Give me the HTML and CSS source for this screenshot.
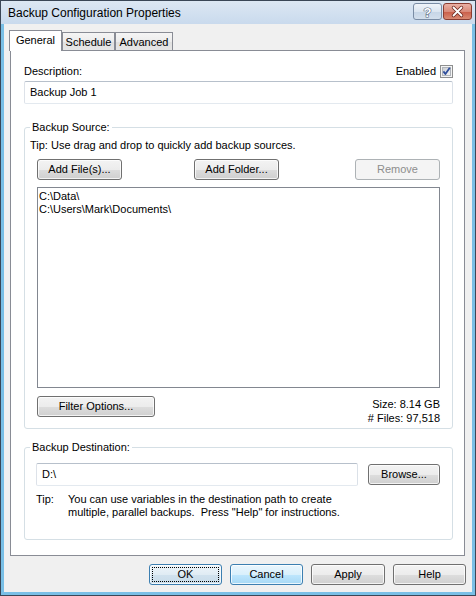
FILE: index.html
```html
<!DOCTYPE html>
<html>
<head>
<meta charset="utf-8">
<title>Backup Configuration Properties</title>
<link rel="stylesheet" href="styles.css">
</head>
<body>
<div class="window">
  <div class="titlebar">
    <span class="title">Backup Configuration Properties</span>
    <div class="caption-btns">
      <span class="cbtn cbtn-help">
        <svg width="27" height="15" viewBox="0 0 27 15"><text x="13.5" y="12.5" text-anchor="middle" font-family="Liberation Sans, sans-serif" font-weight="bold" font-size="13" fill="#ffffff" stroke="#5a6a80" stroke-width="1.2" paint-order="stroke">?</text></svg>
      </span>
      <span class="cbtn cbtn-close">
        <svg width="27" height="15" viewBox="0 0 27 15"><path d="M9.5 3.5 L17.5 11.5 M17.5 3.5 L9.5 11.5" stroke="#6e2a20" stroke-width="3.4" stroke-linecap="round" fill="none"/><path d="M9.5 3.5 L17.5 11.5 M17.5 3.5 L9.5 11.5" stroke="#ffffff" stroke-width="1.8" stroke-linecap="round" fill="none"/></svg>
      </span>
    </div>
  </div>
  <div class="client">
    <div class="tabs">
      <div class="tab tab-active tab-general">General</div>
      <div class="tab tab-schedule">Schedule</div>
      <div class="tab tab-advanced">Advanced</div>
    </div>
    <div class="panel">
      <div class="desc-row">
        <span>Description:</span>
        <span class="enabled">Enabled
          <svg class="checkbox" width="13" height="13" viewBox="0 0 13 13">
            <defs><linearGradient id="cbg" x1="0" y1="0" x2="1" y2="1"><stop offset="0" stop-color="#c9ccd1"/><stop offset="1" stop-color="#f7f7f7"/></linearGradient></defs>
            <rect x="0.5" y="0.5" width="12" height="12" fill="#f4f4f4" stroke="#8e8f8f"/>
            <rect x="2.5" y="2.5" width="8" height="8" fill="url(#cbg)" stroke="#b0b4ba" stroke-width="1"/>
            <path d="M3.4 6.4 L5.4 9 L9.8 2.8" stroke="#2f4e9c" stroke-width="1.8" fill="none" stroke-linejoin="round"/>
          </svg>
        </span>
      </div>
      <div class="textbox desc-input">Backup Job 1</div>

      <fieldset class="group group-source">
        <legend>Backup Source:</legend>
        <p class="tip">Tip: Use drag and drop to quickly add backup sources.</p>
        <div class="btn-row">
          <button class="btn btn-src">Add File(s)...</button>
          <button class="btn btn-src btn-folder">Add Folder...</button>
          <button class="btn btn-src btn-remove btn-disabled">Remove</button>
        </div>
        <div class="listbox">
          <div>C:\Data\</div>
          <div>C:\Users\Mark\Documents\</div>
        </div>
        <div class="filter-row">
          <button class="btn btn-filter">Filter Options...</button>
          <div class="stats">
            <div>Size: 8.14 GB</div>
            <div># Files: 97,518</div>
          </div>
        </div>
      </fieldset>

      <fieldset class="group group-dest">
        <legend>Backup Destination:</legend>
        <div class="dest-row">
          <div class="textbox dest-input">D:\</div>
          <button class="btn btn-browse">Browse...</button>
        </div>
        <div class="dest-tip">
          <span>Tip:</span>
          <span>You can use variables in the destination path to create<br>multiple, parallel backups.&nbsp; Press "Help" for instructions.</span>
        </div>
      </fieldset>
    </div>
    <div class="dialog-btns">
      <button class="btn btn-dlg btn-default">OK</button>
      <button class="btn btn-dlg btn-hot">Cancel</button>
      <button class="btn btn-dlg btn-apply">Apply</button>
      <button class="btn btn-dlg">Help</button>
    </div>
  </div>
</div>
</body>
</html>
```
FILE: styles.css
```css
* { box-sizing: border-box; }
html, body { margin: 0; padding: 0; }
body {
  width: 476px;
  height: 596px;
  overflow: hidden;
  font-family: "Liberation Sans", Arial, sans-serif;
  font-size: 11px;
  color: #000;
  background: #ffffff;
}

.window {
  width: 476px;
  height: 596px;
  border: 1px solid #3a4656;
  background: #79bfe6;
  display: flex;
  flex-direction: column;
}

.titlebar {
  height: 23px;
  flex: none;
  display: flex;
  align-items: flex-start;
  padding: 0 3px 0 7px;
  background: linear-gradient(#dce7f3, #c9daed);
}
.title {
  font-size: 12px;
  line-height: 24px;
}
.caption-btns {
  margin-left: auto;
  display: flex;
  gap: 1px;
  padding-top: 2px;
}
.cbtn {
  width: 29px;
  height: 17px;
  border-radius: 3px;
  display: flex;
  align-items: center;
  justify-content: center;
}
.cbtn-help {
  border: 1px solid #7a8ca4;
  background: linear-gradient(#f0f4f9, #dbe5f0 50%, #c6d5e6 51%, #d3dfec);
}
.cbtn-close {
  border: 1px solid #8a3c31;
  background: linear-gradient(#eab0a4, #d98a7a 50%, #c95c48 51%, #d98a73);
}

.client {
  flex: 1;
  margin: 0 3px 3px 3px;
  background: #f0f0f0;
  padding: 6px 6px 0 5px;
}

.tabs {
  display: flex;
  align-items: flex-end;
  height: 21px;
  margin-bottom: -1px;
  position: relative;
  z-index: 1;
}
.tab {
  height: 18px;
  margin-bottom: 1px;
  border: 1px solid #898c95;
  border-bottom: none;
  background: linear-gradient(#f5f5f5, #ececec 50%, #e0e0e0 51%, #e6e6e6);
  text-align: center;
  line-height: 18px;
}
.tab-active {
  height: 21px;
  margin-bottom: 0;
  background: #ffffff;
  line-height: 19px;
}
.tab-general { width: 53px; }
.tab-schedule { width: 53px; }
.tab-advanced { width: 58px; }

.panel {
  margin-left: 1px;
  width: 455px;
  height: 506px;
  border: 1px solid #898c95;
  background: #ffffff;
  padding: 13px 11px 0 13px;
}

.desc-row {
  height: 14px;
  display: flex;
  align-items: center;
  justify-content: space-between;
  line-height: 13px;
}
.enabled {
  display: flex;
  align-items: center;
  gap: 4px;
}
.checkbox { display: block; }

.textbox {
  height: 23px;
  border: 1px solid;
  border-color: #b7c0cb #dbe1e8 #e3e9ef #dde2e9;
  border-radius: 2px;
  padding: 0 5px;
  line-height: 21px;
  background: #fff;
}
.desc-input { margin-top: 3px; }

.group {
  margin: 17px 0 0 0;
  padding: 0 12px 3px 12px;
  border: 1px solid #d5dfe5;
  border-radius: 3px;
  min-width: 0;
}
.group legend {
  padding: 0 2px;
  margin-left: -7px;
  line-height: 13px;
}
.group-dest {
  margin-top: 12px;
  padding: 0 12px 20px 11px;
}
.group-dest legend { margin-left: -6px; }

.tip {
  margin: 5px 0 0 -7px;
  line-height: 13px;
}

.btn {
  font-family: inherit;
  font-size: 11px;
  color: #000;
  height: 21px;
  padding: 0;
  border: 1px solid #707070;
  border-radius: 3px;
  background: linear-gradient(#f3f3f3, #ececec 50%, #dddddd 51%, #cfcfcf);
  box-shadow: inset 0 0 0 1px rgba(255, 255, 255, 0.75);
  line-height: 19px;
  text-align: center;
}
.btn-row {
  margin-top: 7px;
  display: flex;
}
.btn-src { width: 85px; }
.btn-folder { margin-left: 72px; }
.btn-remove { margin-left: auto; }
.btn-disabled {
  border-color: #adb2b5;
  background: #f4f4f4;
  color: #8d8d8d;
  box-shadow: none;
}

.listbox {
  margin-top: 7px;
  height: 201px;
  border: 1px solid #828790;
  padding: 2px 1px;
  line-height: 13px;
}

.filter-row {
  margin-top: 8px;
  display: flex;
  justify-content: space-between;
  align-items: flex-start;
}
.btn-filter { width: 118px; }
.stats {
  text-align: right;
  line-height: 14px;
  margin-top: 1px;
}

.dest-row {
  margin-top: 9px;
  display: flex;
  justify-content: space-between;
  align-items: center;
}
.dest-input { width: 322px; }
.btn-browse { width: 72px; }

.dest-tip {
  margin-top: 7px;
  display: grid;
  grid-template-columns: 32px 1fr;
  line-height: 13px;
}

.dialog-btns {
  margin-top: 8px;
  display: flex;
  justify-content: flex-end;
  gap: 8px;
}
.btn-dlg { width: 73px; }
.btn-apply { width: 74px; }
.btn-default {
  border-color: #3c7fb1;
  background: linear-gradient(#eef5fa, #e0ecf4 50%, #d1e2ee 51%, #c8dcea);
  outline: 1px dotted #000;
  outline-offset: -4px;
}
.btn-hot {
  border-color: #3c7fb1;
  background: linear-gradient(#eaf6fd, #d9f0fc 50%, #bee6fd 51%, #a7d9f5);
}
```
